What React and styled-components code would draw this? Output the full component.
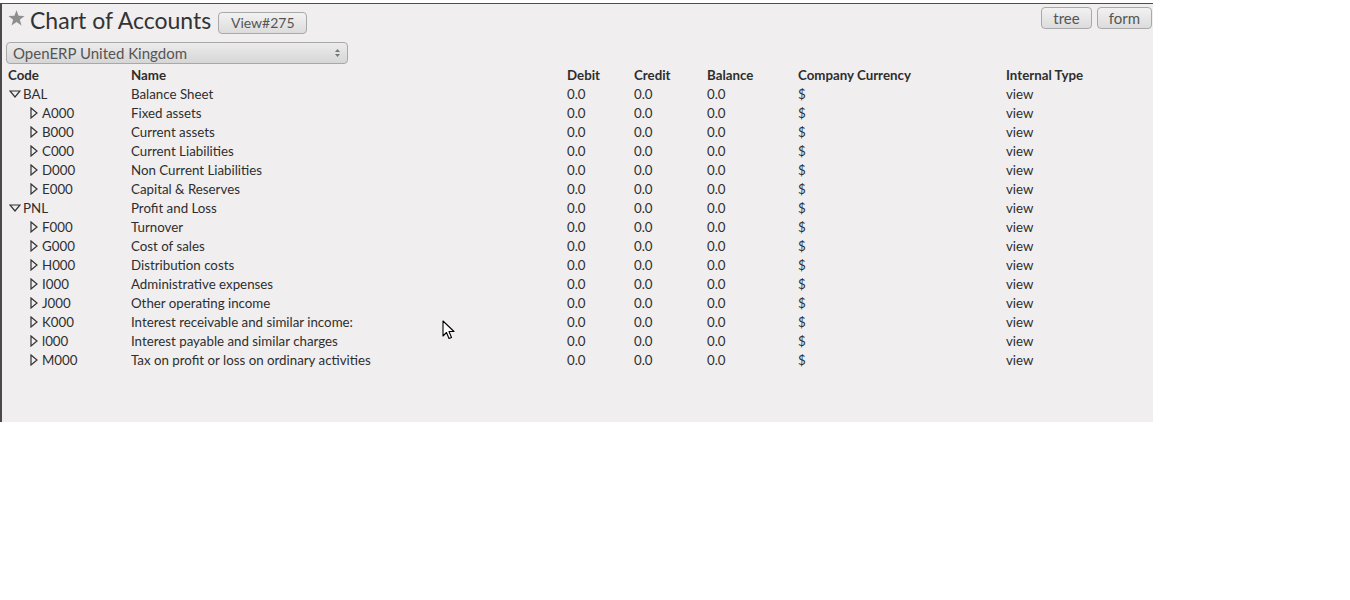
import React from "react";
import styled, { createGlobalStyle } from "styled-components";

const GlobalStyle = createGlobalStyle`
  html, body {
    margin: 0;
    padding: 0;
    background: #ffffff;
  }
  body {
    font-family: "Lato", "Open Sans", sans-serif;
    color: #333;
  }
`;

const Panel = styled.div`
  position: relative;
  width: 1153px;
  height: 419px;
  margin-top: 3px;
  background: #f0eeee;
  border-top: 1px solid #7a3a38;
  border-left: 2px solid #4a4a4a;
  box-sizing: border-box;
  padding: 2px 1px 0 4px;
`;

const TitleBar = styled.div`
  display: flex;
  align-items: flex-start;
  justify-content: space-between;
  height: 36px;
`;

const TitleLeft = styled.div`
  display: flex;
  align-items: center;
  gap: 4px;
`;

const Star = styled.svg`
  margin: -4px 0 0 2px;
`;

const Title = styled.h1`
  margin: 0 0 0 1px;
  font-size: 23px;
  font-weight: 400;
  color: #333;
  line-height: 28px;
`;

const Btn = styled.button`
  font-family: "Lato", "Open Sans", sans-serif;
  font-size: ${(p) => p.$size || 15}px;
  color: #555;
  height: 22px;
  width: ${(p) => p.$w}px;
  padding: 0;
  border: 1px solid #a9a9a9;
  border-radius: 4px;
  background: linear-gradient(#f2f2f2, #dcdcdc);
  line-height: 18px;
  cursor: pointer;
`;

const ViewTag = styled(Btn)`
  margin: 5px 0 0 3px;
`;

const ViewSwitch = styled.div`
  display: flex;
  gap: 5px;
  padding-top: 1px;
`;

const Select = styled.div`
  display: flex;
  align-items: center;
  justify-content: space-between;
  width: 342px;
  height: 22px;
  box-sizing: border-box;
  padding: 0 6px;
  border: 1px solid #a8a8a8;
  border-radius: 4px;
  background: linear-gradient(#ececec, #d6d6d6);
  font-size: 15px;
  color: #555;
`;

const Table = styled.div`
  display: grid;
  grid-template-columns: 123px 436px 67px 73px 91px 208px 1fr;
  grid-auto-rows: 19px;
  margin-top: 1px;
  margin-left: 2px;
  font-size: 13.3px;
  color: #2e2e2e;
`;

const Cell = styled.div`
  display: flex;
  align-items: center;
  white-space: nowrap;
  font-weight: ${(p) => (p.$head ? 700 : 400)};
  padding-left: ${(p) => p.$indent || 0}px;
`;

const Arrow = styled.svg`
  flex: none;
  margin-right: ${(p) => p.$gap}px;
`;

const Cursor = styled.svg`
  position: absolute;
  left: 440px;
  top: 316px;
`;

const rows = [
  ["BAL", "Balance Sheet", true],
  ["A000", "Fixed assets"],
  ["B000", "Current assets"],
  ["C000", "Current Liabilities"],
  ["D000", "Non Current Liabilities"],
  ["E000", "Capital & Reserves"],
  ["PNL", "Profit and Loss", true],
  ["F000", "Turnover"],
  ["G000", "Cost of sales"],
  ["H000", "Distribution costs"],
  ["I000", "Administrative expenses"],
  ["J000", "Other operating income"],
  ["K000", "Interest receivable and similar income:"],
  ["l000", "Interest payable and similar charges"],
  ["M000", "Tax on profit or loss on ordinary activities"],
];

function Expander({ open }) {
  return open ? (
    <Arrow $gap={2} width="12" height="8" viewBox="0 0 12 8">
      <path d="M1 1 L11 1 L6 7 Z" fill="none" stroke="#333" strokeWidth="1.2" />
    </Arrow>
  ) : (
    <Arrow $gap={4} width="8" height="12" viewBox="0 0 8 12">
      <path d="M1 1 L7 6 L1 11 Z" fill="none" stroke="#333" strokeWidth="1.2" />
    </Arrow>
  );
}

export default function App() {
  return (
    <>
      <GlobalStyle />
      <Panel>
        <TitleBar>
          <TitleLeft>
            <Star width="17" height="16" viewBox="0 0 24 23">
              <path
                d="M12 0.5 L15 8.3 L23.5 8.6 L16.8 13.9 L19.2 22.3 L12 17.4 L4.8 22.3 L7.2 13.9 L0.5 8.6 L9 8.3 Z"
                fill="#8e8e8e"
              />
            </Star>
            <Title>Chart of Accounts</Title>
            <ViewTag $w={89} $size={14}>
              View#275
            </ViewTag>
          </TitleLeft>
          <ViewSwitch>
            <Btn $w={51}>tree</Btn>
            <Btn $w={55}>form</Btn>
          </ViewSwitch>
        </TitleBar>
        <Select>
          <span>OpenERP United Kingdom</span>
          <svg width="7" height="12" viewBox="0 0 7 12">
            <path d="M1 5 L3.5 2 L6 5 Z M1 7 L3.5 10 L6 7 Z" fill="#777" />
          </svg>
        </Select>
        <Table>
          <Cell $head>Code</Cell>
          <Cell $head>Name</Cell>
          <Cell $head>Debit</Cell>
          <Cell $head>Credit</Cell>
          <Cell $head>Balance</Cell>
          <Cell $head>Company Currency</Cell>
          <Cell $head>Internal Type</Cell>
          {rows.map(([code, name, top]) => (
            <React.Fragment key={code}>
              <Cell $indent={top ? 1 : 22}>
                <Expander open={top} />
                {code}
              </Cell>
              <Cell>{name}</Cell>
              <Cell>0.0</Cell>
              <Cell>0.0</Cell>
              <Cell>0.0</Cell>
              <Cell>$</Cell>
              <Cell>view</Cell>
            </React.Fragment>
          ))}
        </Table>
        <Cursor width="14" height="20" viewBox="0 0 14 20">
          <path
            d="M1 1 L1 16 L4.5 12.5 L7 18.5 L9.5 17.5 L7 11.5 L12 11.5 Z"
            fill="#fff"
            stroke="#000"
            strokeWidth="1.1"
            strokeLinejoin="round"
          />
        </Cursor>
      </Panel>
    </>
  );
}
